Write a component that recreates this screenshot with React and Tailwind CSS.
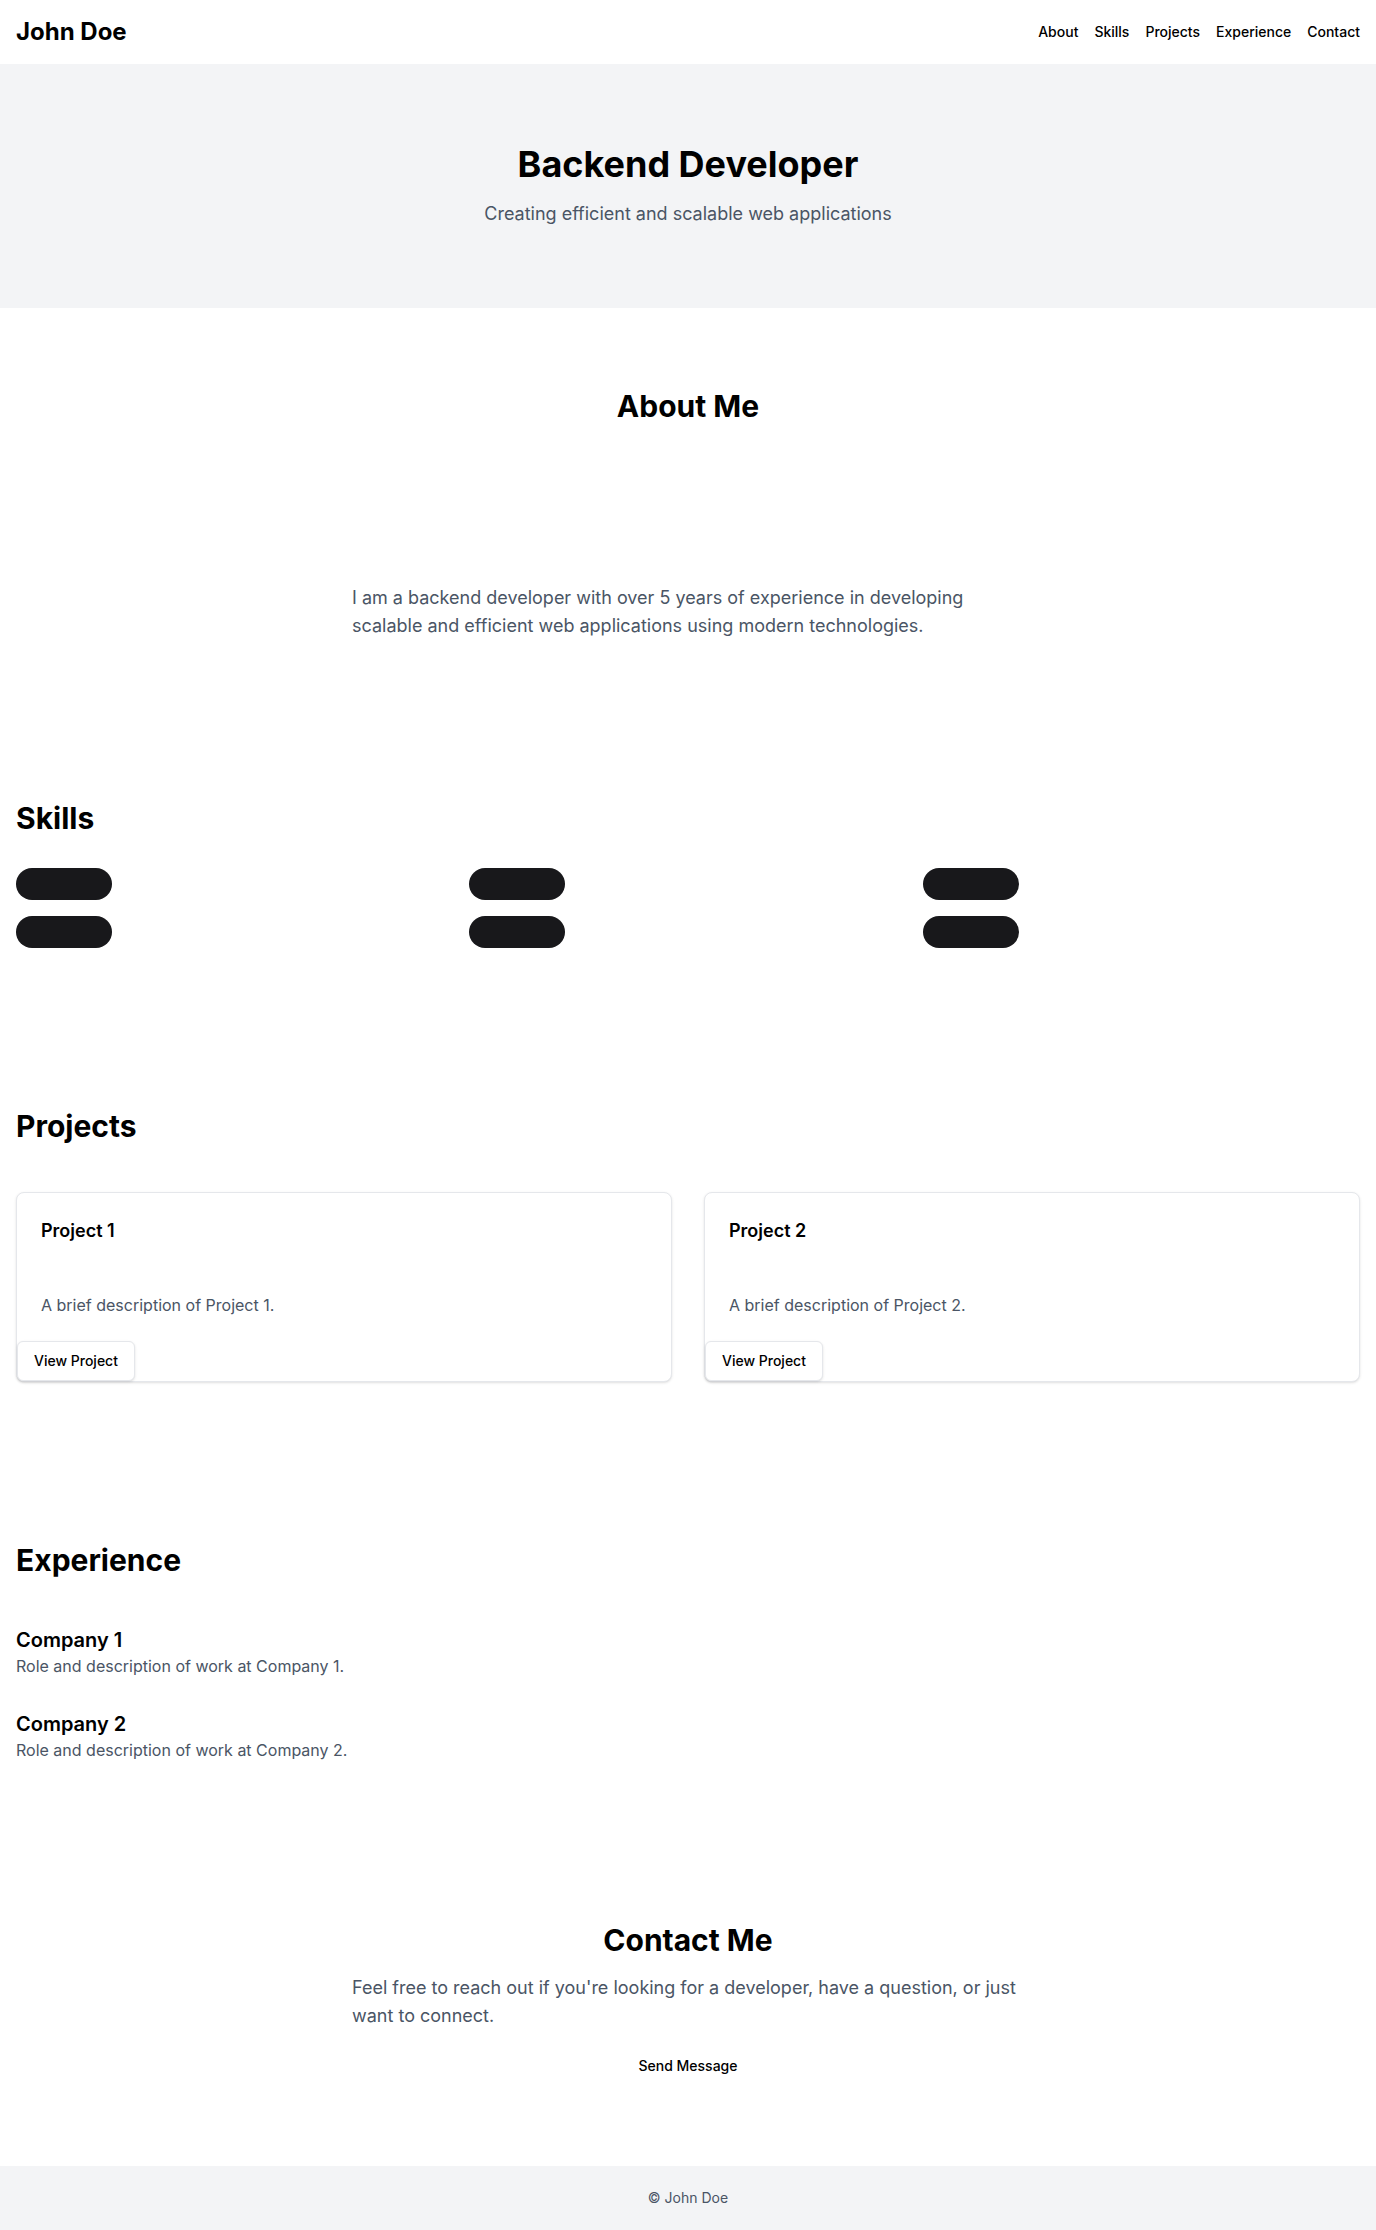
import React from "react";

const navLinks = ["About", "Skills", "Projects", "Experience", "Contact"];

const projects = [
  { title: "Project 1", desc: "A brief description of Project 1." },
  { title: "Project 2", desc: "A brief description of Project 2." },
];

const jobs = [
  { company: "Company 1", desc: "Role and description of work at Company 1." },
  { company: "Company 2", desc: "Role and description of work at Company 2." },
];

function App() {
  return (
    <div className="min-h-screen bg-white text-black font-['Inter','Noto_Sans',sans-serif]">
      <header className="h-16 px-4 flex items-center justify-between bg-white">
        <h1 className="text-2xl font-bold">John Doe</h1>
        <nav className="flex gap-4 text-sm font-medium">
          {navLinks.map((link) => (
            <a key={link} href={`#${link.toLowerCase()}`}>
              {link}
            </a>
          ))}
        </nav>
      </header>

      <section className="bg-gray-100 py-20 text-center">
        <h2 className="text-4xl font-bold mb-4">Backend Developer</h2>
        <p className="text-lg text-gray-600">Creating efficient and scalable web applications</p>
      </section>

      <section id="about" className="py-20 px-4">
        <h2 className="text-3xl font-bold text-center mb-8">About Me</h2>
        <div className="h-32"></div>
        <p className="max-w-2xl mx-auto text-lg text-gray-600">
          I am a backend developer with over 5 years of experience in developing scalable and efficient web
          applications using modern technologies.
        </p>
      </section>

      <section id="skills" className="py-20 px-4">
        <h2 className="text-3xl font-bold mb-8">Skills</h2>
        <div className="grid grid-cols-3 gap-4">
          {[1, 2, 3, 4, 5, 6].map((i) => (
            <div key={i}>
              <span className="block w-24 h-8 rounded-full bg-[#18181b]"></span>
            </div>
          ))}
        </div>
      </section>

      <section id="projects" className="py-20 px-4">
        <h2 className="text-3xl font-bold mb-12">Projects</h2>
        <div className="grid grid-cols-2 gap-8">
          {projects.map((p) => (
            <div key={p.title} className="border border-gray-200 rounded-lg shadow-sm bg-white">
              <div className="p-6">
                <h3 className="text-lg font-semibold">{p.title}</h3>
              </div>
              <div className="p-6 pt-6">
                <p className="text-gray-600">{p.desc}</p>
              </div>
              <button className="h-10 px-4 text-sm font-medium border border-gray-200 rounded-md shadow-sm bg-white">
                View Project
              </button>
            </div>
          ))}
        </div>
      </section>

      <section id="experience" className="py-20 px-4">
        <h2 className="text-3xl font-bold mb-12">Experience</h2>
        <div className="space-y-8">
          {jobs.map((j) => (
            <div key={j.company}>
              <h3 className="text-xl font-semibold">{j.company}</h3>
              <p className="text-gray-600">{j.desc}</p>
            </div>
          ))}
        </div>
      </section>

      <section id="contact" className="py-20 px-4 text-center">
        <h2 className="text-3xl font-bold mb-4">Contact Me</h2>
        <p className="max-w-2xl mx-auto text-lg text-gray-600 text-left">
          Feel free to reach out if you're looking for a developer, have a question, or just want to connect.
        </p>
        <button className="mt-4 h-10 px-4 text-sm font-medium">Send Message</button>
      </section>

      <footer className="h-16 bg-gray-100 flex items-center justify-center text-sm text-gray-600">
        © John Doe
      </footer>
    </div>
  );
}

export default App;
